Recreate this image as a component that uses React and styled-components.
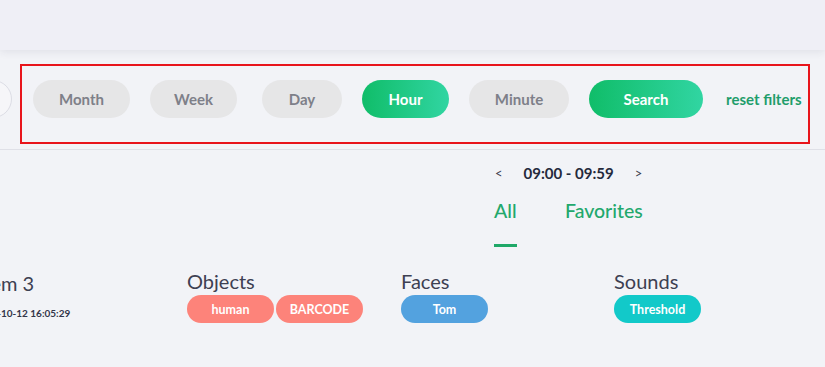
import React from "react";
import styled, { createGlobalStyle } from "styled-components";

const GlobalStyle = createGlobalStyle`
  html, body {
    margin: 0;
    padding: 0;
    background: #f2f3f7;
    font-family: "Lato", "Noto Sans", sans-serif;
    overflow: hidden;
  }
`;

const Page = styled.div`
  width: 825px;
  height: 367px;
  overflow: hidden;
  background: #f2f3f7;
`;

const Header = styled.header`
  height: 50px;
  background: #efeff6;
  box-shadow: 0 2px 8px rgba(40, 40, 80, 0.09);
  position: relative;
  z-index: 1;
`;

const FilterRow = styled.div`
  display: flex;
  align-items: flex-start;
  padding: 14px 0 5px;
  border-bottom: 1px solid #dfe0e7;
`;

const DateCircle = styled.div`
  flex: none;
  width: 38px;
  height: 38px;
  margin: 16px 0 0 -26px;
  border-radius: 50%;
  border: 1px solid #dcdde5;
  background: #f6f6f9;
  box-sizing: border-box;
`;

const FilterBox = styled.div`
  flex: none;
  box-sizing: border-box;
  width: 790px;
  height: 80px;
  margin-left: 8px;
  border: 2px solid #e8141b;
  display: flex;
  align-items: flex-start;
  padding: 14px 0 0 1px;
`;

const Pill = styled.button`
  flex: none;
  box-sizing: border-box;
  width: ${(p) => p.$w}px;
  height: 38px;
  padding: 0;
  margin: 0 ${(p) => p.$mr ?? 20}px 0 ${(p) => p.$ml ?? 0}px;
  border: none;
  border-radius: 19px;
  font-family: "Lato", sans-serif;
  font-weight: 700;
  font-size: 15px;
  cursor: pointer;
  color: ${(p) => (p.$active ? "#ffffff" : "#7e8089")};
  background: ${(p) =>
    p.$active ? "linear-gradient(90deg, #10bd69 0%, #31d5a2 100%)" : "#e6e6e7"};
`;

const ResetLink = styled.a`
  margin-left: 23px;
  line-height: 38px;
  font-size: 15px;
  font-weight: 700;
  color: #1f9d6b;
  white-space: nowrap;
`;

const Upper = styled.div`
  display: grid;
  grid-template-columns: 494px 1fr;
`;

const RightPanel = styled.div`
  display: flex;
  flex-direction: column;
  align-items: flex-start;
`;

const TimeNav = styled.div`
  display: flex;
  align-items: center;
  gap: 21px;
  height: 20px;
  margin-top: 13px;
  padding-left: 1px;
  color: #2a2e3f;
`;

const Arrow = styled.span`
  font-size: 13px;
  color: #3a3d4c;
`;

const TimeText = styled.span`
  font-size: 15px;
  font-weight: 700;
  color: #252a3c;
`;

const Tabs = styled.div`
  display: flex;
  margin-top: 18px;
`;

const Tab = styled.div`
  width: 71px;
  font-size: 19.5px;
  line-height: 20px;
  color: #22a86c;
  font-weight: 500;
  span {
    display: inline-block;
    padding-bottom: 23px;
    border-bottom: 3px solid ${(p) => (p.$active ? "#1fa868" : "transparent")};
  }
`;

const EventRow = styled.div`
  display: grid;
  grid-template-columns: 187px 214px 213px 1fr;
  margin-top: 20px;
`;

const TitleCell = styled.div`
  overflow: hidden;
  padding-top: 4px;
`;

const Title = styled.div`
  margin-left: ${(p) => p.$shift}px;
  font-size: 20px;
  line-height: 24px;
  color: #3d4052;
  white-space: nowrap;
`;

const DateText = styled.div`
  margin-left: ${(p) => p.$shift}px;
  margin-top: 12px;
  font-size: 10px;
  font-weight: 700;
  color: #33364a;
  white-space: nowrap;
`;

const Group = styled.div`
  display: flex;
  flex-direction: column;
  align-items: flex-start;
`;

const GroupTitle = styled.div`
  font-size: 20px;
  line-height: 24px;
  color: #3d4052;
  padding-top: 2px;
`;

const Chips = styled.div`
  display: flex;
  gap: 2px;
  margin-top: 2px;
`;

const Chip = styled.span`
  box-sizing: border-box;
  width: 87px;
  height: 28px;
  border-radius: 14px;
  background: ${(p) => p.$color};
  color: #fff;
  font-size: 12.5px;
  font-weight: 700;
  display: flex;
  align-items: center;
  justify-content: center;
`;

const ranges = [
  { label: "Month", w: 97 },
  { label: "Week", w: 87, mr: 25 },
  { label: "Day", w: 80 },
  { label: "Hour", w: 87, active: true },
  { label: "Minute", w: 100 },
];

const groups = [
  { title: "Objects", chips: [["human", "#fd837a"], ["BARCODE", "#fd837a"]] },
  { title: "Faces", chips: [["Tom", "#53a2df"]] },
  { title: "Sounds", chips: [["Threshold", "#12c9c9"]] },
];

export default function App() {
  return (
    <Page>
      <GlobalStyle />
      <Header />
      <FilterRow>
        <DateCircle />
        <FilterBox>
          {ranges.map((r, i) => (
            <Pill key={r.label} $w={r.w} $mr={r.mr} $ml={i === 0 ? 10 : 0} $active={r.active}>
              {r.label}
            </Pill>
          ))}
          <Pill $w={114} $mr={0} $active>
            Search
          </Pill>
          <ResetLink>reset filters</ResetLink>
        </FilterBox>
      </FilterRow>
      <Upper>
        <div />
        <RightPanel>
          <TimeNav>
            <Arrow>&lt;</Arrow>
            <TimeText>09:00 - 09:59</TimeText>
            <Arrow>&gt;</Arrow>
          </TimeNav>
          <Tabs>
            <Tab $active>
              <span>All</span>
            </Tab>
            <Tab>
              <span>Favorites</span>
            </Tab>
          </Tabs>
        </RightPanel>
      </Upper>
      <EventRow>
        <TitleCell>
          <Title $shift={-22}>Item 3</Title>
          <DateText $shift={-26}>2021-10-12 16:05:29</DateText>
        </TitleCell>
        {groups.map((g) => (
          <Group key={g.title}>
            <GroupTitle>{g.title}</GroupTitle>
            <Chips>
              {g.chips.map(([t, c]) => (
                <Chip key={t} $color={c}>
                  {t}
                </Chip>
              ))}
            </Chips>
          </Group>
        ))}
      </EventRow>
    </Page>
  );
}
